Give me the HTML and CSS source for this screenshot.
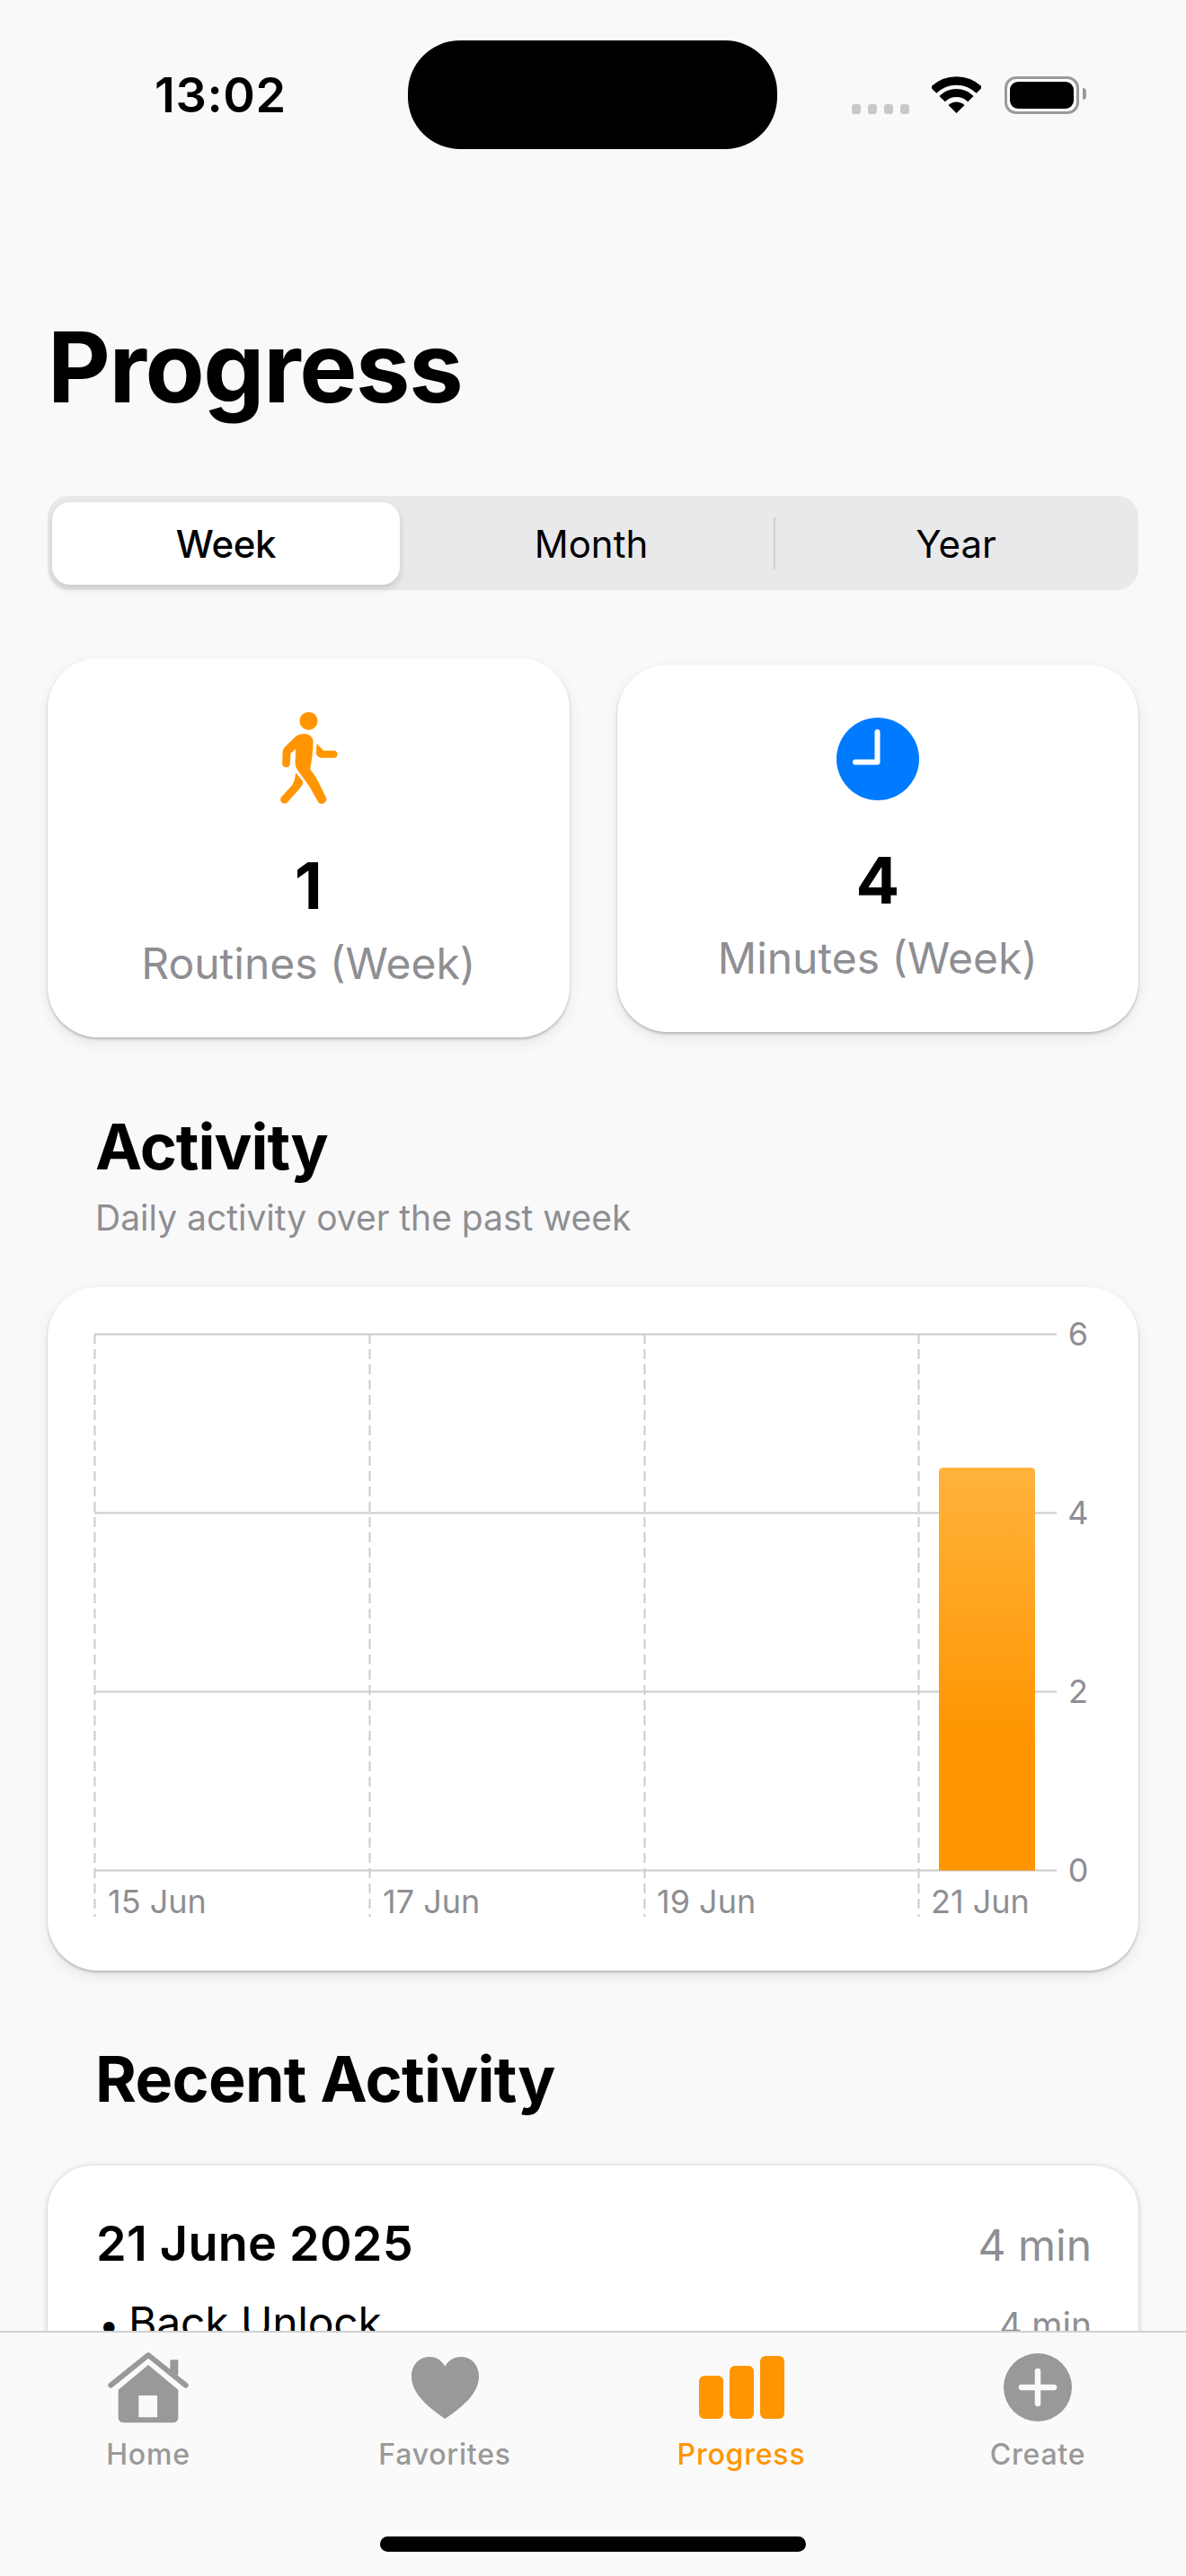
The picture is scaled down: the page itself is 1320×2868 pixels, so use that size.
FILE: index.html
```html
<!DOCTYPE html>
<html lang="en">
<head>
    <meta charset="UTF-8">
    <title>Progress</title>
    <link rel="stylesheet" href="styles.css">
</head>
<body>
    <div class="screen">
        <main class="content">
            <div class="status-bar">
                <div class="time">13:02</div>
                <div class="island"></div>
                <div class="status-icons">
                    <div class="signal"><span></span><span></span><span></span><span></span></div>
                    <svg class="wifi" viewBox="0 0 55 42" width="55" height="42">
                        <path d="M2 15.5A36 36 0 0 1 53 15.5" fill="none" stroke="#000" stroke-width="9.5"/>
                        <path d="M11.6 25.1A22.5 22.5 0 0 1 43.4 25.1" fill="none" stroke="#000" stroke-width="9"/>
                        <path d="M27.5 41L18.5 32A13 13 0 0 1 36.5 32Z" fill="#000"/>
                    </svg>
                    <div class="battery"><div class="battery-fill"></div></div>
                </div>
            </div>

            <h1 class="page-title">Progress</h1>

            <div class="segmented">
                <div class="segment active">Week</div>
                <div class="segment">Month</div>
                <div class="segment with-divider">Year</div>
            </div>

            <div class="stats">
                <div class="stat-card">
                    <svg class="stat-icon" viewBox="150 65 200 315" width="67" height="105">
                        <circle cx="250" cy="97" r="30" fill="#ff9500"/>
                        <path fill="#ff9500" d="M235 140C215 140 205 150 195 160L172 183C165 190 163 196 163 205L162 238C162 248 170 252 176 252C184 252 188 246 188 238L190 205L207 190L205 235C205 248 210 258 218 268L252 315L282 368C292 382 316 368 308 352L282 300C275 285 262 268 255 258C262 225 265 190 265 165C265 150 250 140 235 140Z"/>
                        <path fill="#ff9500" d="M207 270L232 300C230 312 224 318 218 325L180 368C170 380 150 368 158 352L195 312C202 300 205 290 207 270Z"/>
                        <path fill="#ff9500" d="M277 172L300 196L335 196C350 196 350 220 335 220L295 220C285 220 275 212 275 205Z"/>
                    </svg>
                    <div class="stat-value">1</div>
                    <div class="stat-label">Routines (Week)</div>
                </div>
                <div class="stat-card">
                    <svg class="stat-icon" viewBox="0 0 92 92" width="92" height="92">
                        <circle cx="46" cy="46" r="46" fill="#007aff"/>
                        <path d="M45.500 16V49.500H21" fill="none" stroke="#fff" stroke-width="6" stroke-linecap="round" stroke-linejoin="round"/>
                    </svg>
                    <div class="stat-value">4</div>
                    <div class="stat-label">Minutes (Week)</div>
                </div>
            </div>

            <h2 class="section-title activity-title">Activity</h2>
            <p class="section-sub">Daily activity over the past week</p>

            <div class="chart-card">
                <svg class="chart" viewBox="0 0 1214 761" width="1214" height="761">
                    <defs>
                        <linearGradient id="barFill" x1="0" y1="0" x2="0" y2="1">
                            <stop offset="0" stop-color="#ffb33c"/>
                            <stop offset="0.68" stop-color="#ff9500"/>
                        </linearGradient>
                    </defs>
                    <path class="grid-v" d="M52.500 52V701M358.500 52V701M664.500 52V701M969.500 52V701"/>
                    <path class="grid-h" d="M52 52.500H1123M52 251.500H1123M52 450.500H1123M52 649.500H1123"/>
                    <path d="M992 649.500V206Q992 201 997 201H1094Q1099 201 1099 206V649.500Z" fill="url(#barFill)"/>
                    <text class="axis-text" x="1147" y="65" text-anchor="middle">6</text>
                    <text class="axis-text" x="1147" y="264" text-anchor="middle">4</text>
                    <text class="axis-text" x="1147" y="463" text-anchor="middle">2</text>
                    <text class="axis-text" x="1147" y="662" text-anchor="middle">0</text>
                    <text class="axis-text" x="67" y="697">15 Jun</text>
                    <text class="axis-text" x="373" y="697">17 Jun</text>
                    <text class="axis-text" x="678" y="697">19 Jun</text>
                    <text class="axis-text" x="983" y="697">21 Jun</text>
                </svg>
            </div>

            <h2 class="section-title recent-title">Recent Activity</h2>

            <div class="recent-card">
                <div class="recent-head">
                    <div class="recent-date">21 June 2025</div>
                    <div class="recent-total">4 min</div>
                </div>
                <div class="recent-row">
                    <div class="recent-name"><span class="bullet">•</span>Back Unlock</div>
                    <div class="recent-time">4 min</div>
                </div>
            </div>
        </main>

        <nav class="tab-bar">
            <div class="tabs">
                <div class="tab">
                    <div class="tab-icon">
                        <svg viewBox="90 50 270 240" width="90" height="80">
                            <path d="M100 163L225 62L350 163" fill="none" stroke="#999" stroke-width="18" stroke-linecap="round" stroke-linejoin="round"/>
                            <rect x="298" y="78" width="27" height="50" rx="4" fill="#999"/>
                            <path fill="#999" fill-rule="evenodd" d="M225 95L325 178V270Q325 288 305 288H145Q125 288 125 270V178ZM193 197V270H255V197Z"/>
                        </svg>
                    </div>
                    <div class="tab-label">Home</div>
                </div>
                <div class="tab">
                    <div class="tab-icon">
                        <svg viewBox="0 0 225 207" width="75" height="69">
                            <path fill="#999" d="M112 207C60 170 0 125 0 65C0 25 28 0 60 0C85 0 102 14 112 32C122 14 140 0 165 0C197 0 225 25 225 65C225 125 165 170 112 207Z"/>
                        </svg>
                    </div>
                    <div class="tab-label">Favorites</div>
                </div>
                <div class="tab selected">
                    <div class="tab-icon">
                        <svg viewBox="0 0 95 70" width="95" height="70">
                            <rect x="0" y="22" width="27" height="48" rx="6" fill="#ff9500"/>
                            <rect x="34" y="11" width="27" height="59" rx="6" fill="#ff9500"/>
                            <rect x="68" y="0" width="27" height="70" rx="6" fill="#ff9500"/>
                        </svg>
                    </div>
                    <div class="tab-label">Progress</div>
                </div>
                <div class="tab">
                    <div class="tab-icon">
                        <svg viewBox="0 0 76 76" width="76" height="76">
                            <circle cx="38" cy="38" r="38" fill="#999"/>
                            <path d="M38 20V56M20 38H56" stroke="#fafafa" stroke-width="6.500" stroke-linecap="round"/>
                        </svg>
                    </div>
                    <div class="tab-label">Create</div>
                </div>
            </div>
            <div class="home-indicator"></div>
        </nav>
    </div>
</body>
</html>
```

FILE: styles.css
```css
* {
    box-sizing: border-box;
}
body {
    margin: 0;
    font-family: Inter, "Liberation Sans", sans-serif;
    background-color: #f9f9f9;
    color: #000;
}
.screen {
    width: 1320px;
    height: 2868px;
    display: flex;
    flex-direction: column;
    overflow: hidden;
}
.content {
    height: 2595px;
    padding: 0 53px;
    overflow: hidden;
}

/* status bar */
.status-bar {
    display: flex;
    align-items: center;
    height: 121px;
    margin-top: 45px;
}
.time {
    width: 401px;
    padding-left: 119px;
    font-size: 54px;
    font-weight: 600;
    letter-spacing: 0.6px;
}
.island {
    width: 411px;
    height: 121px;
    border-radius: 58px;
    background-color: #000;
}
.status-icons {
    display: flex;
    align-items: center;
    margin-left: 83px;
}
.signal {
    display: flex;
    gap: 8px;
    margin-top: 32px;
    margin-right: 25px;
}
.signal span {
    width: 10px;
    height: 11px;
    border-radius: 3px;
    background-color: #c8c8c8;
}
.battery {
    position: relative;
    width: 83px;
    height: 42px;
    margin-left: 26px;
    padding: 3px;
    border: 3px solid #9a9a9a;
    border-radius: 13px;
    background-color: #fff;
}
.battery::after {
    content: "";
    position: absolute;
    top: 10px;
    right: -11px;
    width: 4px;
    height: 13px;
    border-radius: 0 4px 4px 0;
    background-color: #9a9a9a;
}
.battery-fill {
    height: 100%;
    border-radius: 9px;
    background-color: #000;
}

.page-title {
    margin: 183px 0 0;
    font-size: 108px;
    line-height: 120px;
    font-weight: 700;
    letter-spacing: -1.4px;
}

/* week / month / year */
.segmented {
    display: grid;
    grid-template-columns: 397px 406px 1fr;
    height: 105px;
    margin-top: 83px;
    padding: 7px 0 6px 5px;
    border-radius: 24px;
    background-color: #e9e9eb;
    font-size: 42px;
}
.segment {
    position: relative;
    display: flex;
    align-items: center;
    justify-content: center;
    font-weight: 400;
}
.segment.active {
    margin-right: 10px;
    border-radius: 20px;
    background-color: #fff;
    box-shadow: 0 4px 8px rgba(0, 0, 0, 0.14);
    font-weight: 500;
    letter-spacing: -0.3px;
}
.segment.with-divider::before {
    content: "";
    position: absolute;
    top: 17px;
    bottom: 17px;
    left: 0;
    width: 2px;
    background-color: #cfcfd2;
}

/* summary cards */
.stats {
    display: flex;
    align-items: center;
    gap: 53px;
    margin-top: 76px;
}
.stat-card {
    flex: 1;
    display: flex;
    flex-direction: column;
    align-items: center;
    padding: 59px 0 54px;
    border-radius: 56px;
    background-color: #fff;
    box-shadow: 0 2px 3px rgba(0, 0, 0, 0.22), 0 6px 16px rgba(0, 0, 0, 0.08);
}
.stat-icon {
    display: block;
}
.stat-value {
    margin-top: 49px;
    font-size: 72px;
    line-height: 80px;
    font-weight: 700;
}
.stat-label {
    margin-top: 19px;
    font-size: 48px;
    line-height: 56px;
    color: #8e8e93;
}

/* section headings */
.section-title {
    margin: 0 0 0 53px;
    font-size: 70px;
    line-height: 84px;
    font-weight: 700;
    letter-spacing: -1px;
}
.activity-title {
    margin-top: 80px;
}
.recent-title {
    margin-top: 79px;
    letter-spacing: -0.7px;
}
.section-sub {
    margin: 14px 0 0 53px;
    font-size: 39px;
    line-height: 46px;
    color: #8e8e93;
}

/* chart */
.chart-card {
    height: 761px;
    margin-top: 54px;
    border-radius: 56px;
    background-color: #fff;
    box-shadow: 0 2px 3px rgba(0, 0, 0, 0.22), 0 6px 16px rgba(0, 0, 0, 0.08);
}
.chart {
    display: block;
}
.grid-h {
    fill: none;
    stroke: #cbcbcd;
    stroke-width: 2;
}
.grid-v {
    fill: none;
    stroke: #cbcbcd;
    stroke-width: 2;
    stroke-dasharray: 11 6;
}
.axis-text {
    font-size: 36px;
    fill: #8e8e93;
}

/* recent list */
.recent-card {
    height: 400px;
    margin-top: 54px;
    padding: 55px 52px 0 54px;
    border-radius: 50px;
    background-color: #fff;
    box-shadow: 0 1px 6px rgba(0, 0, 0, 0.22);
}
.recent-head,
.recent-row {
    display: flex;
    justify-content: space-between;
    align-items: baseline;
}
.recent-date {
    font-size: 54px;
    line-height: 64px;
    font-weight: 600;
    letter-spacing: 0.25px;
}
.recent-total {
    font-size: 48px;
    color: #8e8e93;
}
.recent-row {
    margin-top: 26px;
}
.recent-name {
    font-size: 48px;
    line-height: 60px;
    letter-spacing: -0.2px;
}
.bullet {
    display: inline-block;
    width: 36px;
    padding-left: 3px;
    font-size: 40px;
}
.recent-time {
    font-size: 39px;
    color: #8e8e93;
}

/* tab bar */
.tab-bar {
    height: 273px;
    padding-top: 21px;
    border-top: 2px solid #d0d0d0;
    background-color: #fafafa;
}
.tabs {
    display: grid;
    grid-template-columns: repeat(4, 1fr);
}
.tab {
    display: flex;
    flex-direction: column;
    align-items: center;
}
.tab-icon {
    display: flex;
    align-items: center;
    justify-content: center;
    height: 80px;
}
.tab-icon svg {
    display: block;
}
.tab-label {
    margin-top: 17px;
    font-size: 32px;
    line-height: 36px;
    font-weight: 500;
    color: #999;
    letter-spacing: 0.8px;
}
.tab.selected .tab-label {
    color: #ff9500;
}
.home-indicator {
    width: 474px;
    height: 17px;
    margin: 73px auto 0;
    border-radius: 9px;
    background-color: #000;
}
```
